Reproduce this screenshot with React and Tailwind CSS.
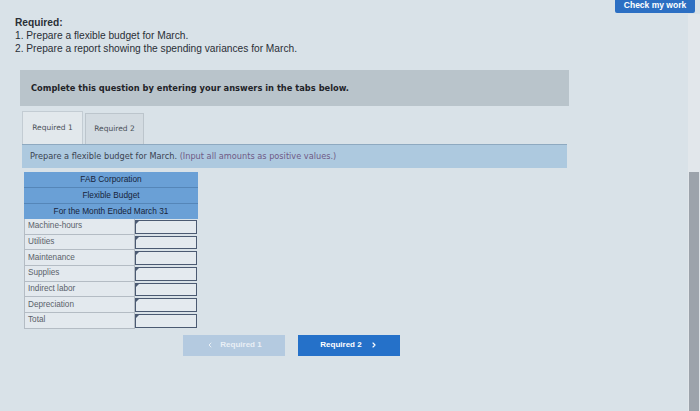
import { ChevronLeft, ChevronRight } from "lucide-react";

const rows = ["Machine-hours", "Utilities", "Maintenance", "Supplies", "Indirect labor", "Depreciation", "Total"];

function InputCell() {
  return (
    <div className="relative h-full border border-[#4b5a72] bg-[#e4eaef]">
      <span className="absolute left-0 top-0 h-0 w-0 border-t-[3px] border-r-[3px] border-t-[#4b5a72] border-r-transparent" />
    </div>
  );
}

export default function App() {
  return (
    <div className="relative h-[411px] w-[700px] overflow-hidden bg-[#d9e2e8]" style={{ fontFamily: '"Liberation Sans", Arial, sans-serif' }}>
      {/* top right button */}
      <button className="absolute right-[5px] top-[-4px] h-[17px] w-[80px] rounded-[2px] bg-[#2c6fc3] pt-[2px] text-[8.5px] font-bold text-white">
        Check my work
      </button>

      {/* scrollbar */}
      <div className="absolute right-0 top-[14px] bottom-0 w-[12px] bg-[#e2e7eb]">
        <div className="ml-[1px] mt-[158px] h-[260px] w-[10px] bg-[#9ca3ab]" />
      </div>

      <div className="pl-[15px] pt-[16px] pr-[131px]">
        <div className="text-[10.2px] leading-[13px] text-[#2a2f36]">
          <div className="font-bold">Required:</div>
          <div>1. Prepare a flexible budget for March.</div>
          <div>2. Prepare a report showing the spending variances for March.</div>
        </div>

        <div className="ml-[5px] mt-[15px] flex h-[36px] items-center bg-[#b9c4cb] pl-[11px] text-[8.3px] font-bold text-[#1f2328]" style={{ fontFamily: '"DejaVu Sans", Verdana, sans-serif' }}>
          Complete this question by entering your answers in the tabs below.
        </div>

        <div className="ml-[7px] mt-[5px] w-[545px]" style={{ fontFamily: '"DejaVu Sans", Verdana, sans-serif' }}>
          <div className="flex items-end gap-[2px]">
            <div className="flex h-[33px] w-[61px] items-center justify-center border border-b-0 border-[#c3ccd3] bg-[#e2e8ec] text-[7.5px] text-[#4a5058]">
              Required 1
            </div>
            <div className="flex h-[31px] w-[59px] items-center justify-center border border-b-0 border-[#bcc5cc] bg-[#d3dbe1] text-[7.5px] text-[#4a5058]">
              Required 2
            </div>
          </div>
          <div className="flex h-[24px] items-center border-t border-[#8ea9c0] bg-[#adc9df] pl-[8px] text-[8.2px] text-[#3b4350]">
            Prepare a flexible budget for March.&nbsp;<span className="text-[#6f5a86]">(Input all amounts as positive values.)</span>
          </div>
        </div>

        {/* table */}
        <div className="ml-[9px] mt-[4px] w-[174px] text-[8px] text-[#3a4048]">
          <div className="bg-[#6aa0d6] text-center text-[8.3px] text-[#17243a]">
            <div className="flex h-[16px] items-center justify-center border-b border-[#5586b8]">FAB Corporation</div>
            <div className="flex h-[16px] items-center justify-center border-b border-[#5586b8]">Flexible Budget</div>
            <div className="flex h-[15px] items-center justify-center">For the Month Ended March 31</div>
          </div>
          {rows.map((r) => (
            <div key={r} className="flex h-[15.7px]">
              <div className="flex w-[111px] items-center border-b border-l border-r border-[#b4bcc4] bg-[#e3e9ee] pl-[3px] text-[8.2px] text-[#5a616a]">
                {r}
              </div>
              <div className="flex-1 py-[1px] pr-[1px]">
                <InputCell />
              </div>
            </div>
          ))}
        </div>

        {/* nav buttons */}
        <div className="ml-[168px] mt-[6px] flex gap-[13px]">
          <button className="flex h-[21px] w-[102px] items-center justify-center gap-[6px] bg-[#b4cae0] text-[8px] font-bold text-[#e9eff5]">
            <ChevronLeft size={8} strokeWidth={3} />
            Required 1
          </button>
          <button className="flex h-[21px] w-[102px] items-center justify-center gap-[8px] bg-[#2571c9] text-[8px] font-bold text-white">
            Required 2
            <ChevronRight size={8} strokeWidth={3.5} />
          </button>
        </div>
      </div>
    </div>
  );
}
